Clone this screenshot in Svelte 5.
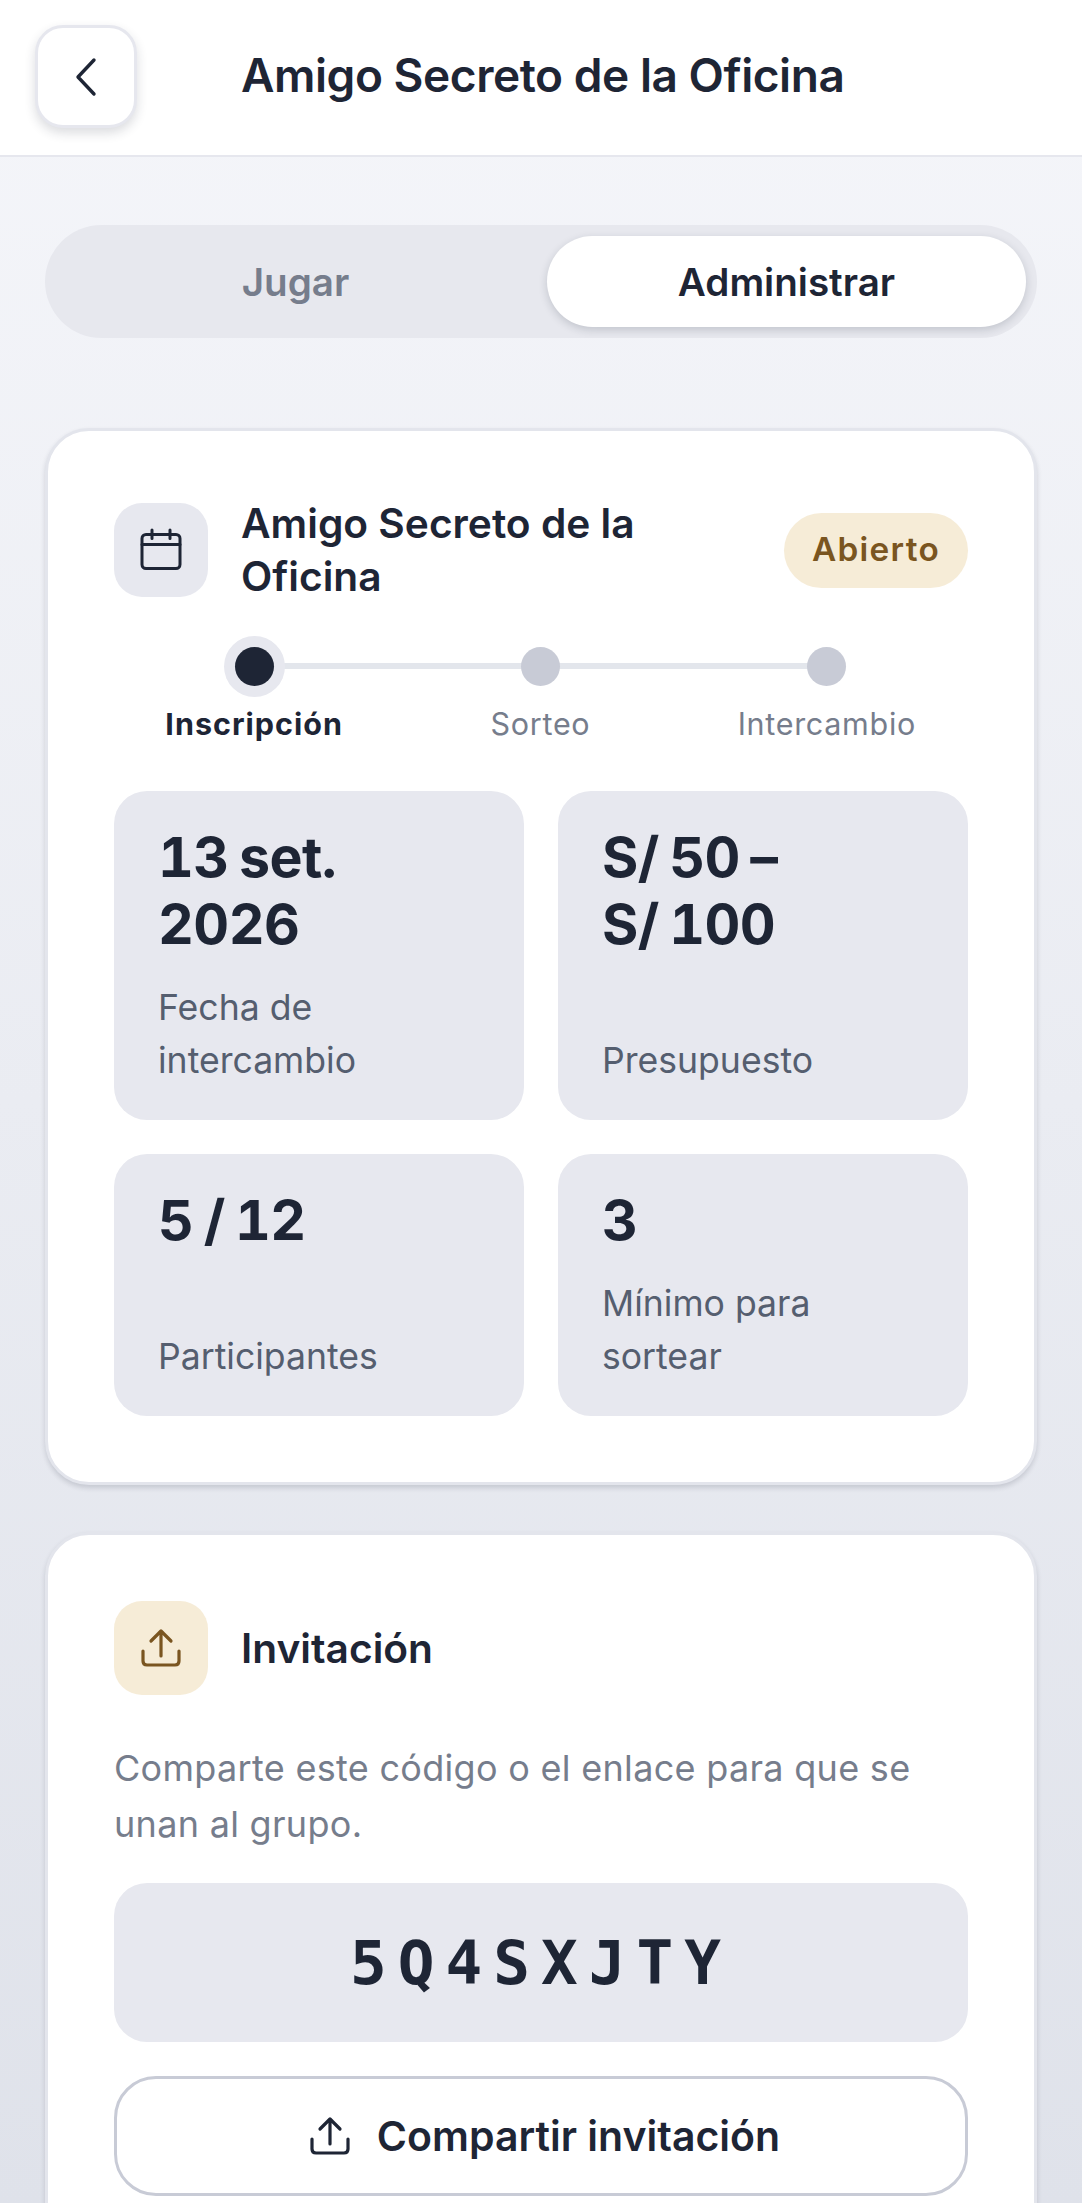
<script>
  const steps = [
    { label: "Inscripción", active: true },
    { label: "Sorteo", active: false },
    { label: "Intercambio", active: false },
  ];

  const stats = [
    { value: "13 set.\n2026", label: "Fecha de intercambio" },
    { value: "S/ 50 –\nS/ 100", label: "Presupuesto" },
    { value: "5 / 12", label: "Participantes" },
    { value: "3", label: "Mínimo para sortear" },
  ];
</script>

<div class="page">
  <header class="topbar">
    <button class="back" aria-label="Volver">
      <svg width="30" height="40" viewBox="0 0 30 40" fill="none">
        <path d="M23 3 L7 20 L23 37" stroke="#1e2535" stroke-width="3.4" stroke-linecap="round" stroke-linejoin="round" />
      </svg>
    </button>
    <h1>Amigo Secreto de la Oficina</h1>
  </header>

  <main>
    <div class="tabs">
      <button class="tab">Jugar</button>
      <button class="tab on">Administrar</button>
    </div>

    <section class="card">
      <div class="head">
        <div class="tile">
          <svg width="44" height="44" viewBox="0 0 44 44" fill="none" stroke="#1e2535" stroke-width="3" stroke-linecap="round" stroke-linejoin="round">
            <rect x="3" y="6.5" width="38" height="34" rx="4" />
            <path d="M3 16.5 H41 M13 2 V10.5 M31 2 V10.5" />
          </svg>
        </div>
        <h2 class="title">Amigo Secreto de la Oficina</h2>
        <span class="badge">Abierto</span>
      </div>

      <div class="steps">
        {#each steps as step}
          <div class="step" class:active={step.active}>
            <span class="dot"></span>
            <span class="step-label">{step.label}</span>
          </div>
        {/each}
      </div>

      <div class="stats">
        {#each stats as stat}
          <div class="stat">
            <div class="value">{stat.value}</div>
            <div class="label">{stat.label}</div>
          </div>
        {/each}
      </div>
    </section>

    <section class="card">
      <div class="head">
        <div class="tile warm">
          <svg width="40" height="40" viewBox="0 0 40 40" fill="none" stroke="#7a5520" stroke-width="3.2" stroke-linecap="round" stroke-linejoin="round">
            <path d="M20 28 V3 M10 13 L20 3 L30 13 M2 23 V33 Q2 37 6 37 H34 Q38 37 38 33 V23" />
          </svg>
        </div>
        <h2 class="title">Invitación</h2>
      </div>

      <p class="desc">Comparte este código o el enlace para que se unan al grupo.</p>
      <div class="code">5Q4SXJTY</div>
      <button class="share">
        <svg width="40" height="40" viewBox="0 0 40 40" fill="none" stroke="#1e2535" stroke-width="3.2" stroke-linecap="round" stroke-linejoin="round">
          <path d="M20 28 V3 M10 13 L20 3 L30 13 M2 23 V33 Q2 37 6 37 H34 Q38 37 38 33 V23" />
        </svg>
        Compartir invitación
      </button>
    </section>
  </main>
</div>

<style>
  :global(body) {
    margin: 0;
  }
  .page {
    height: 2203px;
    overflow: hidden;
    font-family: Inter, "Noto Sans", sans-serif;
    color: #1e2535;
    background: linear-gradient(180deg, #f5f6fa 0%, #dfe2ea 100%);
  }
  .topbar {
    box-sizing: border-box;
    height: 157px;
    display: flex;
    align-items: center;
    gap: 104px;
    padding: 0 35px;
    background: #fff;
    border-bottom: 2px solid #e6e7ee;
  }
  .back {
    width: 102px;
    height: 103px;
    flex: none;
    padding: 0;
    margin-bottom: 2px;
    display: flex;
    align-items: center;
    justify-content: center;
    background: #fff;
    border: 3px solid #e6e7ee;
    border-radius: 28px;
    box-shadow: 0 5px 11px rgba(30, 37, 53, 0.16);
  }
  h1 {
    margin: 0 0 6px;
    font-size: 46px;
    font-weight: 600;
    letter-spacing: -0.45px;
  }
  main {
    padding: 68px 45px 0;
  }
  .tabs {
    display: flex;
    height: 113px;
    box-sizing: border-box;
    padding: 11px;
    gap: 12px;
    background: #e7e8ee;
    border-radius: 57px;
    margin-bottom: 90px;
  }
  .tab {
    flex: 1;
    border: 0;
    background: none;
    border-radius: 46px;
    font: 600 38.6px Inter, sans-serif;
    color: #767d8c;
  }
  .tab.on {
    background: #fff;
    color: #1e2535;
    box-shadow: 0 3px 8px rgba(30, 37, 53, 0.18);
  }
  .card {
    box-sizing: border-box;
    background: #fff;
    border: 3px solid #e3e5ec;
    border-radius: 44px;
    padding: 66px;
    margin-bottom: 47px;
    box-shadow: 0 3px 5px rgba(30, 37, 53, 0.16);
  }
  .head {
    display: flex;
    align-items: center;
    gap: 33px;
  }
  .tile {
    width: 94px;
    height: 94px;
    flex: none;
    display: flex;
    align-items: center;
    justify-content: center;
    border-radius: 28px;
    background: #e7e8ef;
  }
  .tile.warm {
    background: #f6ecd7;
  }
  .title {
    flex: 1;
    margin: 0;
    font-size: 40.7px;
    line-height: 53px;
    font-weight: 600;
  }
  .badge {
    padding: 0 28px;
    height: 75px;
    line-height: 72px;
    border-radius: 38px;
    background: #f6ecd7;
    color: #7a5520;
    font-size: 33.3px;
    font-weight: 600;
    letter-spacing: 1.3px;
  }
  .steps {
    display: grid;
    grid-template-columns: repeat(3, 1fr);
    margin: 44px -2px 0 -3px;
  }
  .step {
    position: relative;
    display: flex;
    flex-direction: column;
    align-items: center;
    gap: 19px;
  }
  .step:not(:last-child)::after {
    content: "";
    position: absolute;
    top: 16px;
    left: 50%;
    width: 100%;
    height: 6px;
    background: #e3e6ec;
  }
  .dot {
    position: relative;
    z-index: 1;
    width: 39px;
    height: 39px;
    border-radius: 50%;
    background: #c8cbd6;
  }
  .step.active .dot {
    background: #1e2535;
    box-shadow: 0 0 0 11px #e7e8ef;
  }
  .step-label {
    font-size: 30.5px;
    line-height: 38px;
    letter-spacing: 0.7px;
    color: #767d8c;
  }
  .step.active .step-label {
    font-weight: 700;
    letter-spacing: 1px;
    color: #1e2535;
  }
  .stats {
    display: grid;
    grid-template-columns: 1fr 1fr;
    gap: 33.5px 34px;
    margin-top: 48px;
  }
  .stat {
    box-sizing: border-box;
    padding: 33px 44px;
    display: flex;
    flex-direction: column;
    gap: 24px;
    border-radius: 33px;
    background: #e7e8ef;
  }
  .value {
    font-size: 55.5px;
    line-height: 66.6px;
    font-weight: 700;
    letter-spacing: -0.55px;
    word-spacing: -4px;
    font-variant-numeric: tabular-nums;
    white-space: pre-line;
  }
  .label {
    font-size: 35.6px;
    line-height: 53px;
    color: #555e6f;
    margin-top: auto;
  }
  .desc {
    margin: 45px 0 0;
    font-size: 36px;
    line-height: 56px;
    letter-spacing: 0.3px;
    color: #767d8c;
  }
  .code {
    margin-top: 31px;
    height: 159px;
    display: flex;
    align-items: center;
    justify-content: center;
    border-radius: 33px;
    background: #e7e8ef;
    font-family: "DejaVu Sans Mono", monospace;
    font-size: 61px;
    font-weight: 700;
    letter-spacing: 11px;
  }
  .share {
    margin-top: 34px;
    width: 100%;
    height: 120px;
    box-sizing: border-box;
    display: flex;
    align-items: center;
    justify-content: center;
    gap: 27px;
    background: #fff;
    border: 3px solid #c8cbd6;
    border-radius: 42px;
    color: #1e2535;
    font: 600 41px Inter, sans-serif;
  }
  .share svg {
    margin-left: 8px;
  }
</style>
